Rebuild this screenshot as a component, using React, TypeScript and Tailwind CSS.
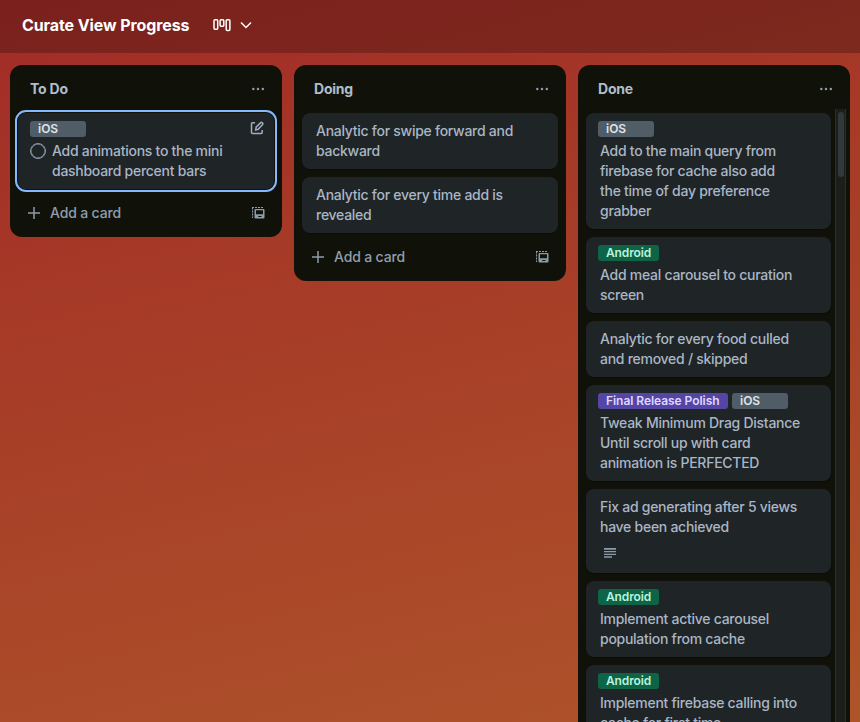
import React from 'react';

type Tag = 'ios' | 'android' | 'polish';

const tagStyles: Record<Tag, string> = {
  ios: 'w-14 bg-[#505c66] text-[#dee4ea]',
  android: 'bg-[#0d6446] text-[#baf3db] tracking-[-0.12px]',
  polish: 'w-[130px] bg-[#5545a5] text-[#dfd8fd] tracking-[-0.05px]',
};
const tagNames: Record<Tag, string> = { ios: 'iOS', android: 'Android', polish: 'Final Release Polish' };

function Label({ tag }: { tag: Tag }) {
  return (
    <span className={`block h-4 rounded-[3px] px-2 text-[12px] leading-[15px] font-semibold whitespace-nowrap ${tagStyles[tag]}`}>
      {tagNames[tag]}
    </span>
  );
}

function Dots() {
  return (
    <svg className="size-4" viewBox="0 0 16 16" fill="#8c9bab">
      <circle cx="3.3" cy="8" r="1.25" />
      <circle cx="8" cy="8" r="1.25" />
      <circle cx="12.8" cy="8" r="1.25" />
    </svg>
  );
}

function TemplateIcon() {
  return (
    <svg className="size-4" viewBox="0 0 16 16" fill="#8c9bab">
      <path d="M2 2h2v1.1H3.1V4.500H2zM5 2h2v1.100H5zM8 2h2v1.100H8zM11 2h2v1.100h-2zM2 5.500h1.100v2H2zM2 8.500h1.100v2H2zM2 11.500h1.100V13H2z" />
      <path
        fillRule="evenodd"
        d="M5.500 4h8a1 1 0 0 1 1 1v7.500a1 1 0 0 1-1 1h-8a1 1 0 0 1-1-1V5a1 1 0 0 1 1-1zM6 5.300v3.900h7V5.300zM8.200 11v1h3.300v-1z"
      />
    </svg>
  );
}

function CardText({ lines }: { lines: string[] }) {
  return (
    <p className="pl-0.5 text-[14px] leading-5 font-[450] tracking-[-0.27px] whitespace-nowrap text-[#a9b6c4]">
      {lines.map((l) => (
        <span key={l} className="block">
          {l}
        </span>
      ))}
    </p>
  );
}

function Card({ lines, tags = [], description }: { lines: string[]; tags?: Tag[]; description?: boolean }) {
  return (
    <article className="shrink-0 rounded-lg bg-[#1f2427] px-3 py-2 shadow-[0_1px_1px_#0b0e0a]">
      {tags.length > 0 && (
        <div className="mb-1 flex gap-1">
          {tags.map((t) => (
            <Label key={t} tag={t} />
          ))}
        </div>
      )}
      <CardText lines={lines} />
      {description && (
        <svg className="mt-2 mb-1 ml-1 size-4" viewBox="0 0 16 16" fill="#8c9bab">
          <path d="M2 3h12v1.800H2zM2 6h12v1.300H2zM2 8.700h12v1.300H2zM2 11.200h8v1.500H2z" />
        </svg>
      )}
    </article>
  );
}

function ListHeader({ name }: { name: string }) {
  return (
    <header className="flex h-12 shrink-0 items-center justify-between pr-4 pl-5">
      <h2 className="text-[14px] leading-5 font-bold tracking-[-0.22px] text-[#b0bdca]">{name}</h2>
      <Dots />
    </header>
  );
}

function AddCard() {
  return (
    <footer className="flex h-12 items-center px-4">
      <svg className="size-4" viewBox="0 0 16 16" stroke="#8c9bab" strokeWidth="1.5">
        <path d="M8 2v12M2 8h12" />
      </svg>
      <span className="ml-2 flex-1 text-[14px] leading-5 font-medium tracking-[-0.16px] text-[#8f9eae]">Add a card</span>
      <TemplateIcon />
    </footer>
  );
}

const done: { lines: string[]; tags?: Tag[]; description?: boolean }[] = [
  { tags: ['ios'], lines: ['Add to the main query from', 'firebase for cache also add', 'the time of day preference', 'grabber'] },
  { tags: ['android'], lines: ['Add meal carousel to curation', 'screen'] },
  { lines: ['Analytic for every food culled', 'and removed / skipped'] },
  { tags: ['polish', 'ios'], lines: ['Tweak Minimum Drag Distance', 'Until scroll up with card', 'animation is PERFECTED'] },
  { lines: ['Fix ad generating after 5 views', 'have been achieved'], description: true },
  { tags: ['android'], lines: ['Implement active carousel', 'population from cache'] },
  { tags: ['android'], lines: ['Implement firebase calling into', 'cache for first time'] },
];

export default function App() {
  return (
    <div className="flex h-[722px] w-[860px] flex-col overflow-hidden bg-[linear-gradient(166deg,#a22b27_0%,#a63a27_35%,#ae542a_100%)] font-['Inter','Liberation_Sans',sans-serif] antialiased">
      <nav className="flex h-[53px] shrink-0 items-center bg-black/24 pb-[3px] pl-[22px]">
        <h1 className="w-[168px] text-[16px] leading-6 font-bold tracking-[-0.1px] whitespace-nowrap text-white">Curate View Progress</h1>
        <svg className="ml-[23px] h-4 w-[18px]" viewBox="0 0 18 16" fill="none" stroke="#fff" strokeWidth="1.5">
          <rect x="1" y="2.700" width="3.700" height="9.600" rx="1" />
          <rect x="7.100" y="2.700" width="3.700" height="6.600" rx="1" />
          <rect x="13.200" y="2.700" width="3.700" height="10.800" rx="1" />
        </svg>
        <svg className="ml-[7px] size-4" viewBox="0 0 16 16" fill="none" stroke="#fff" strokeWidth="1.5">
          <path d="M3 5.500l5 5 5-5" />
        </svg>
      </nav>
      <main className="flex min-h-0 flex-1 items-start gap-3 pt-3 pl-[10px]">
        <section className="w-[272px] shrink-0 rounded-xl bg-[#101209]">
          <ListHeader name="To Do" />
          <article className="mx-2 flex h-[76px] justify-between rounded-lg bg-[#1f2427] px-3 py-2 outline-2 outline-offset-1 outline-[#85b8ff]">
            <div>
              <div className="mb-1 flex">
                <Label tag="ios" />
              </div>
              <div className="flex">
                <span className="mt-0.5 mr-1 size-4 rounded-full border-[1.5px] border-[#8c9bab] shadow-[inset_0_0_0_0.5px_#8c9bab]" />
                <CardText lines={['Add animations to the mini', 'dashboard percent bars']} />
              </div>
            </div>
            <svg className="-mt-[1.5px] -mr-[3px] size-4" viewBox="0 0 16 16" fill="none" stroke="#9fadbc" strokeWidth="1.5">
              <path d="M6 2.800H3.500a1 1 0 0 0-1 1v8.700a1 1 0 0 0 1 1h8.700a1 1 0 0 0 1-1v-2.500" />
              <path d="M6.700 10l.4-2.800 4.600-4.600a1 1 0 0 1 1.400 0l.5.5a1 1 0 0 1 0 1.400L9.200 9.300z" />
            </svg>
          </article>
          <AddCard />
        </section>

        <section className="w-[272px] shrink-0 rounded-xl bg-[#101209]">
          <ListHeader name="Doing" />
          <div className="flex flex-col gap-2 px-2">
            <Card lines={['Analytic for swipe forward and', 'backward']} />
            <Card lines={['Analytic for every time add is', 'revealed']} />
          </div>
          <AddCard />
        </section>

        <section className="flex h-full w-[272px] shrink-0 flex-col overflow-hidden rounded-t-xl bg-[#101209]">
          <ListHeader name="Done" />
          <div className="-mt-1 flex min-h-0 flex-1">
            <div className="flex w-[257px] flex-col gap-2 overflow-hidden pt-1 pr-1 pl-2">
              {done.map((c) => (
                <Card key={c.lines[0]} {...c} />
              ))}
            </div>
            <div className="w-[11px] border-x border-[#2b2e29] bg-[#1c1f19] pt-[3px] pl-0.5">
              <div className="h-[65px] w-1.5 rounded-full bg-[#303a3b]" />
            </div>
          </div>
        </section>
      </main>
    </div>
  );
}
